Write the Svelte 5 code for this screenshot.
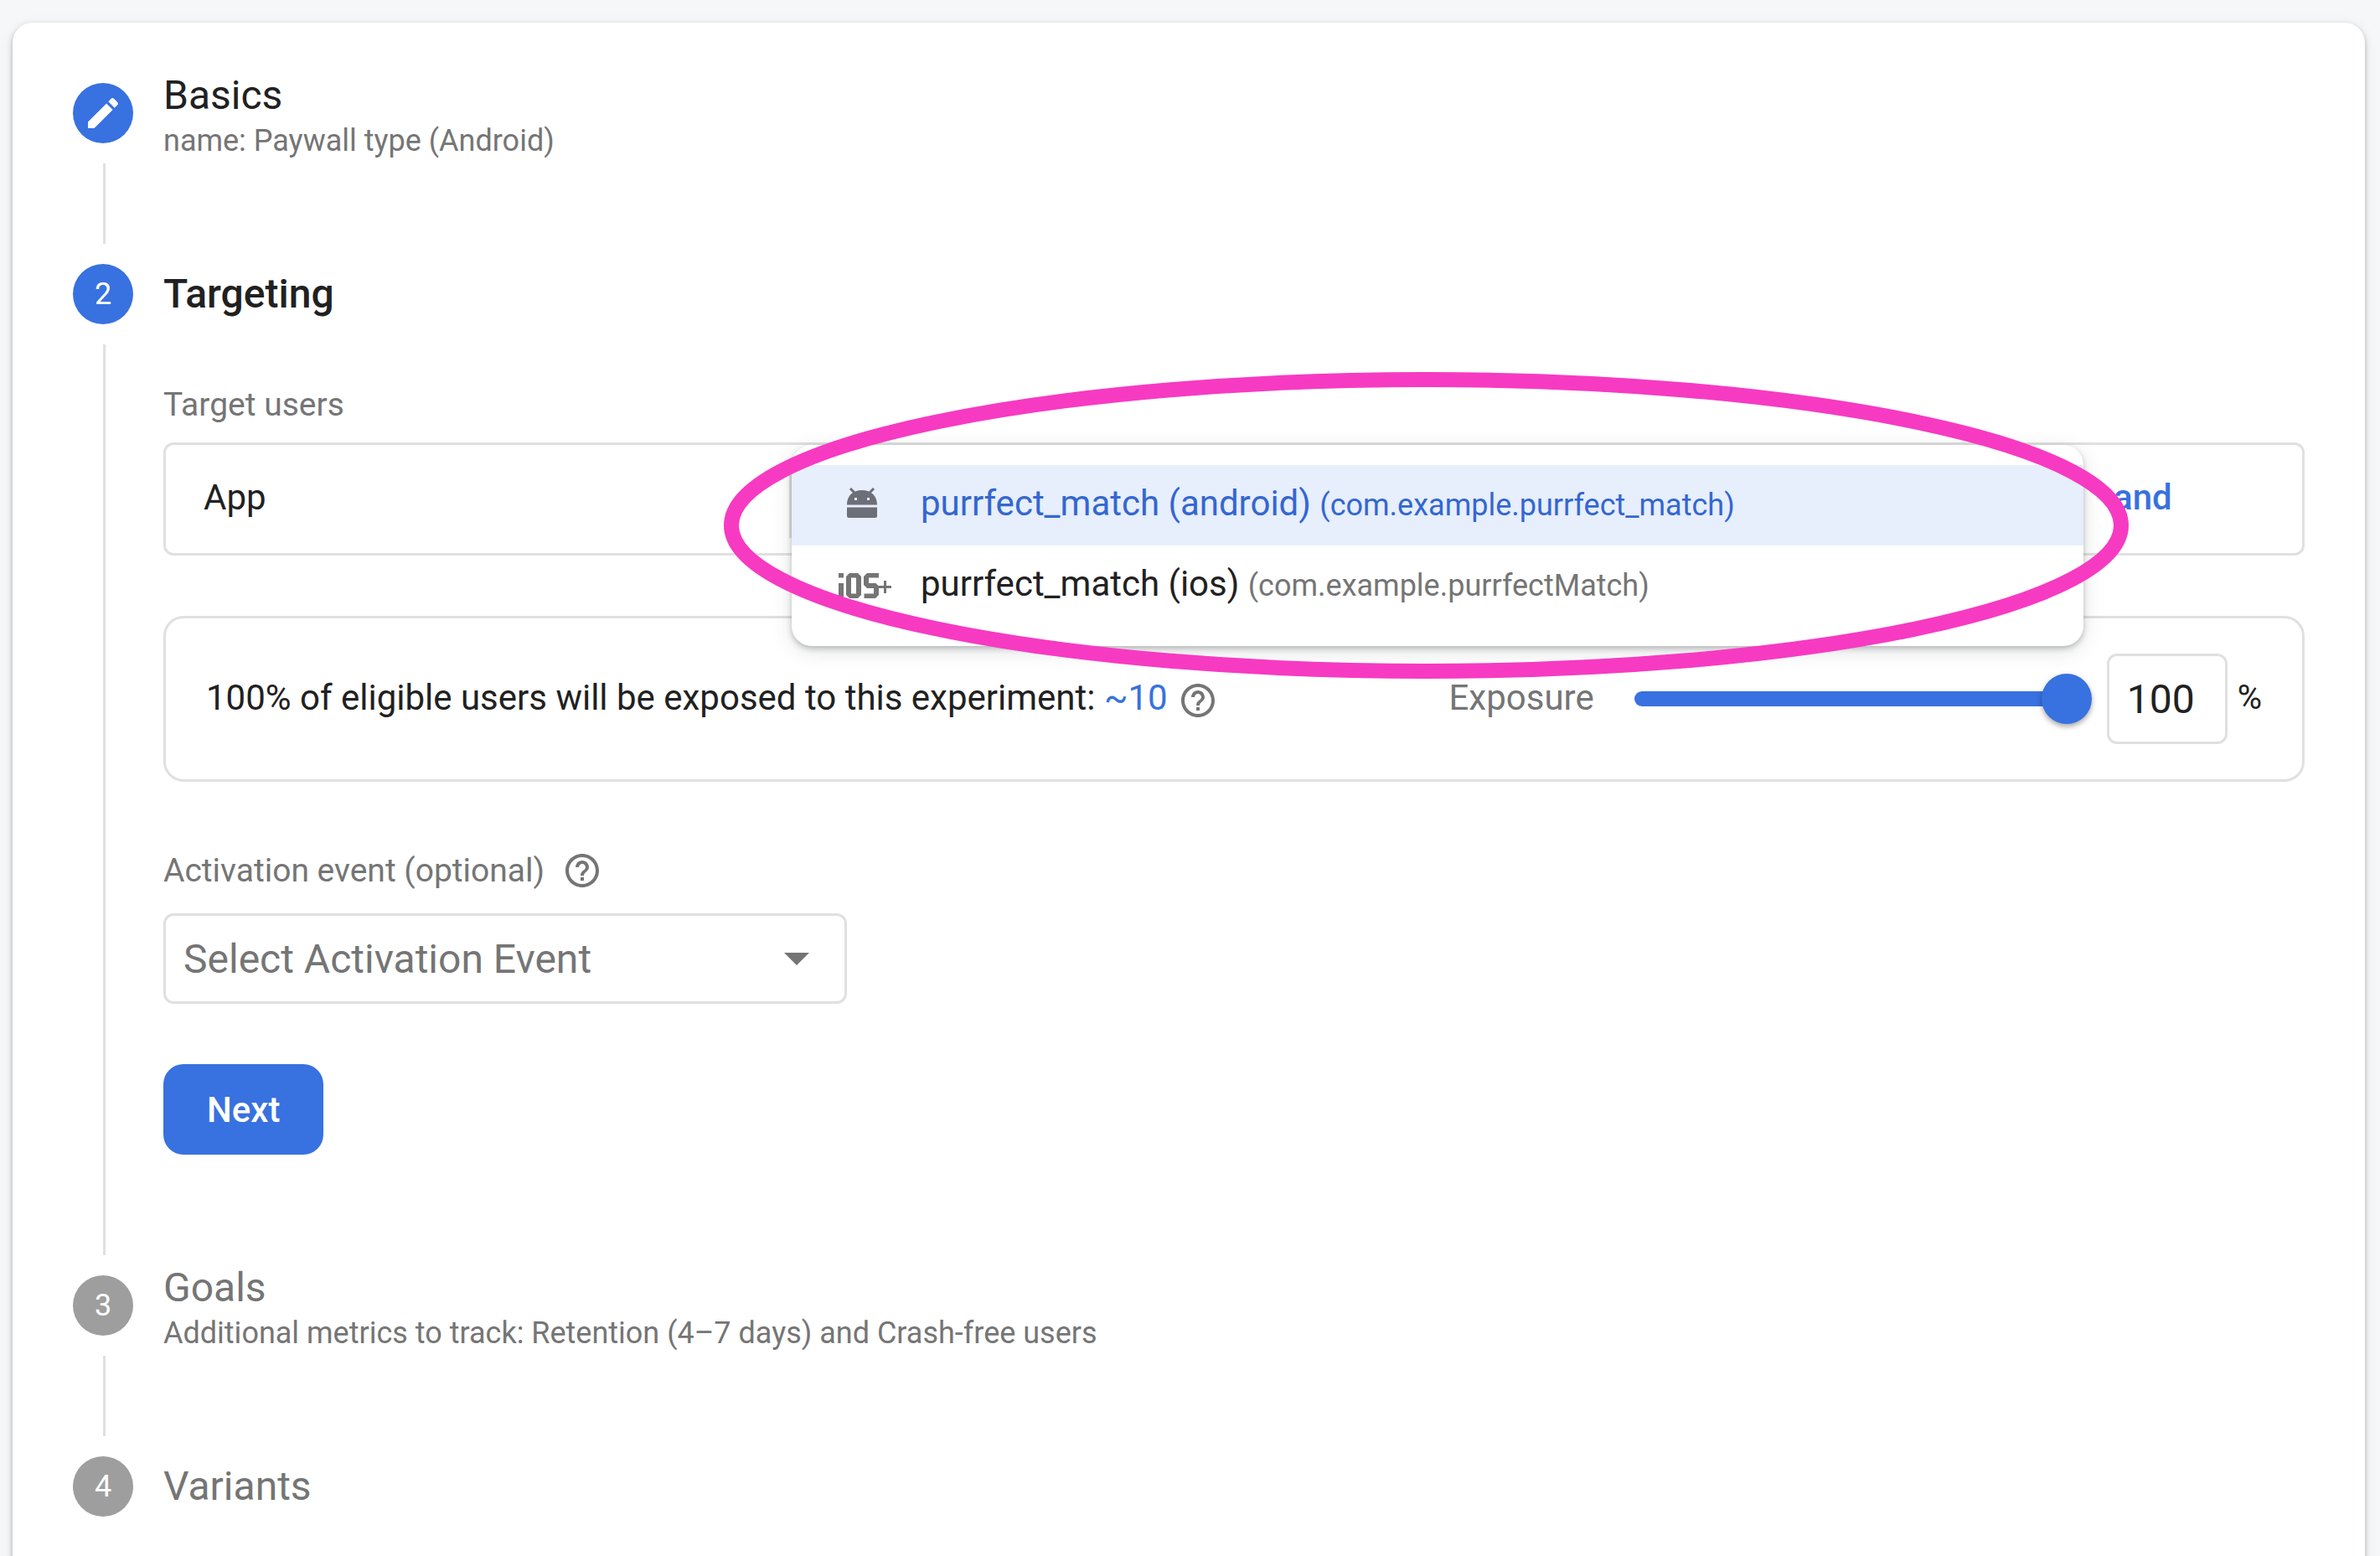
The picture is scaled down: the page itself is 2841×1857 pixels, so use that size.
<script>
  let exposure = $state(100);
  let activationEvent = $state('');

  const apps = [
    { platform: 'android', name: 'purrfect_match (android)', id: '(com.example.purrfect_match)', active: true },
    { platform: 'ios', name: 'purrfect_match (ios)', id: '(com.example.purrfectMatch)', active: false }
  ];
</script>

{#snippet help()}
  <svg class="help" viewBox="0 0 24 24" aria-hidden="true">
    <path d="M11 18h2v-2h-2v2zm1-16C6.480 2 2 6.480 2 12s4.480 10 10 10 10-4.480 10-10S17.520 2 12 2zm0 18c-4.410 0-8-3.590-8-8s3.590-8 8-8 8 3.590 8 8-3.590 8-8 8zm0-14c-2.210 0-4 1.790-4 4h2c0-1.100.9-2 2-2s2 .9 2 2c0 2-3 1.750-3 5h2c0-2.250 3-2.500 3-5 0-2.210-1.790-4-4-4z" />
  </svg>
{/snippet}

<main class="card">
  <section class="step">
    <div class="rail">
      <span class="badge">
        <svg class="pencil" viewBox="0 0 24 24" aria-hidden="true">
          <path d="M3 17.250V21h3.750L17.810 9.940l-3.750-3.750L3 17.250zM20.710 7.040a1 1 0 0 0 0-1.410l-2.340-2.340a1 1 0 0 0-1.410 0l-1.830 1.830 3.750 3.750 1.830-1.830z" />
        </svg>
      </span>
      <span class="line"></span>
    </div>
    <div class="main">
      <header>
        <h2>Basics</h2>
        <p>name: Paywall type (Android)</p>
      </header>
    </div>
  </section>

  <section class="step open">
    <div class="rail">
      <span class="badge">2</span>
      <span class="line"></span>
    </div>
    <div class="main">
      <header>
        <h2 class="current">Targeting</h2>
      </header>
      <form class="body" onsubmit={(e) => e.preventDefault()}>
        <div class="label" id="target-label">Target users</div>
        <div class="target" role="group" aria-labelledby="target-label">
          <span class="kind">App</span>
          <div class="picker">
            <ul class="menu" role="listbox" aria-label="App">
              {#each apps as app}
                <li role="option" aria-selected={app.active} class:active={app.active}>
                  <span class="platform">
                    {#if app.platform === 'android'}
                      <svg class="android" viewBox="0 0 36 36" aria-hidden="true">
                        <path d="M0 23.500h36V33.500a2.500 2.500 0 0 1-2.500 2.500h-31a2.500 2.500 0 0 1-2.500-2.500z" />
                        <path fill-rule="evenodd" d="M0 20.500C0 9.500 7 3 18 3s18 6.500 18 17.500zM9 12v3h3v-3zM24 12v3h3v-3z" />
                        <path class="antenna" d="M4 1l5 5M32 1l-5 5" />
                      </svg>
                    {:else}
                      <svg class="ios" viewBox="0 0 64 30" aria-hidden="true">
                        <path d="M0 0h6v5.500H0zM0 12h6v18H0z" />
                        <path fill-rule="evenodd" d="M13 0h10l4 4v22l-4 4H13l-4-4V4zM15 5.500v19h6v-19z" />
                        <path d="M34 0h14v5.500H36v6.500h8.500l3.500 3.500V26l-4 4H30.500v-5.500H42V18h-8l-4-4V4z" />
                        <path d="M54 9h3v6h6v3h-6v6h-3v-6h-6v-3h6z" />
                      </svg>
                    {/if}
                  </span>
                  <span class="app">{app.name} <small>{app.id}</small></span>
                </li>
              {/each}
            </ul>
            <svg class="ring" viewBox="0 0 1678 366" preserveAspectRatio="none" aria-hidden="true">
              <ellipse cx="839" cy="183" rx="830" ry="174" />
            </svg>
          </div>
          <button type="button" class="and">and</button>
        </div>

        <div class="exposure">
          <p>100% of eligible users will be exposed to this experiment: <a href="#estimate">~10</a></p>
          {@render help()}
          <label class="slider-label" for="slider">Exposure</label>
          <input id="slider" class="slider" type="range" min="0" max="100" bind:value={exposure} />
          <input class="amount" type="text" aria-label="Exposure percentage" bind:value={exposure} />
          <span class="unit">%</span>
        </div>

        <div class="label event-label">
          <label for="event">Activation event (optional)</label>
          {@render help()}
        </div>
        <div class="select">
          <select id="event" bind:value={activationEvent}>
            <option value="">Select Activation Event</option>
          </select>
          <svg class="caret" viewBox="0 0 30 15" aria-hidden="true"><path d="M0 0h30L15 15z" /></svg>
        </div>

        <button type="submit" class="next">Next</button>
      </form>
    </div>
  </section>

  <section class="step muted">
    <div class="rail">
      <span class="badge">3</span>
      <span class="line"></span>
    </div>
    <div class="main">
      <header>
        <h2>Goals</h2>
        <p>Additional metrics to track: Retention (4–7 days) and Crash-free users</p>
      </header>
    </div>
  </section>

  <section class="step muted">
    <div class="rail">
      <span class="badge">4</span>
    </div>
    <div class="main">
      <header>
        <h2>Variants</h2>
      </header>
    </div>
  </section>
</main>

<style>
  :global(html) {
    height: 100%;
    overflow: hidden;
  }
  :global(body) {
    min-height: 100%;
    background: #f5f7f9;
    font-family: Roboto, "Liberation Sans", sans-serif;
    color: #212121;
  }
  :global(#app) {
    overflow: hidden;
  }
  * {
    box-sizing: border-box;
  }
  button,
  input,
  select {
    font-family: inherit;
    color: inherit;
    margin: 0;
  }
  .card {
    margin: 27px 18px 0 15px;
    padding: 72px 72px 0;
    border-radius: 24px 24px 0 0;
    background: #fff;
    box-shadow: 0 3px 6px rgba(0, 0, 0, 0.28), 0 3px 18px rgba(0, 0, 0, 0.06);
  }
  .step {
    display: flex;
    gap: 36px;
    min-height: 216px;
  }
  .rail {
    display: flex;
    flex: none;
    flex-direction: column;
    gap: 24px;
    width: 72px;
    padding-bottom: 24px;
  }
  .badge {
    display: flex;
    flex: none;
    align-items: center;
    justify-content: center;
    width: 72px;
    height: 72px;
    border-radius: 50%;
    background: #3871e0;
    color: #fff;
    font-size: 36px;
  }
  .line {
    flex: 1;
    width: 3px;
    margin-left: 36px;
    background: #e0e0e0;
  }
  .pencil {
    width: 48px;
    fill: #fff;
  }
  .main {
    flex: 1;
    min-width: 0;
  }
  header {
    display: flex;
    flex-direction: column;
    justify-content: center;
    height: 72px;
  }
  h2,
  p {
    margin: 0;
    font-weight: 400;
  }
  h2 {
    flex: none;
    font-size: 48px;
    line-height: 66px;
  }
  h2.current {
    font-weight: 500;
  }
  header p {
    flex: none;
    font-size: 36px;
    line-height: 42px;
    color: #757575;
  }
  .muted h2 {
    color: #757575;
  }
  .muted .badge {
    background: #9e9e9e;
  }
  .body {
    padding: 72px 0 144px;
  }
  .label {
    font-size: 39px;
    line-height: 48px;
    color: #757575;
  }
  .target {
    display: flex;
    align-items: center;
    height: 135px;
    margin-top: 21px;
    border: 3px solid #e0e0e0;
    border-radius: 12px;
    font-size: 42px;
  }
  .kind {
    flex: 0 0 744px;
    padding: 0 0 4px 45px;
  }
  .picker {
    position: relative;
    flex: 1;
    height: 93px;
    border-left: 3px solid #e0e0e0;
  }
  .menu {
    position: absolute;
    z-index: 1;
    top: -18px;
    left: 0;
    width: 100%;
    margin: 0;
    padding: 24px 0;
    border-radius: 24px;
    background: #fff;
    box-shadow: 0 3px 6px rgba(60, 64, 67, 0.3), 0 6px 24px rgba(60, 64, 67, 0.15);
    list-style: none;
  }
  .menu li {
    display: flex;
    align-items: center;
    height: 96px;
    padding: 0 56px;
  }
  .menu .active {
    background: #e7eefc;
    color: #3367d0;
  }
  .platform {
    display: flex;
    flex: none;
    width: 98px;
    fill: #757575;
  }
  .active .platform {
    padding-left: 10px;
    padding-bottom: 6px;
    fill: #6d6f78;
  }
  .android {
    width: 36px;
  }
  .antenna {
    fill: none;
    stroke: #6d6f78;
    stroke-width: 3;
  }
  .ios {
    width: 64px;
  }
  .app {
    padding-bottom: 6px;
    white-space: nowrap;
  }
  small {
    font-size: 36px;
    color: #757575;
  }
  .active small {
    color: inherit;
  }
  .ring {
    position: absolute;
    z-index: 2;
    top: -105px;
    left: -81px;
    width: calc(100% + 135px);
    height: 366px;
    fill: none;
    stroke: #f73ac2;
    stroke-width: 18px;
    pointer-events: none;
  }
  .and {
    flex: 0 0 261px;
    padding: 0 0 4px 36px;
    border: 0;
    background: none;
    color: #3871e0;
    font-size: 42px;
    font-weight: 500;
    text-align: left;
  }
  .exposure {
    display: flex;
    align-items: center;
    height: 198px;
    margin-top: 72px;
    padding: 0 48px;
    border: 3px solid #e0e0e0;
    border-radius: 24px;
    font-size: 42px;
  }
  .exposure p,
  .slider-label,
  .unit {
    padding-bottom: 3px;
  }
  .exposure a {
    color: #3871e0;
    text-decoration: none;
  }
  .help {
    flex: none;
    width: 48px;
    height: 48px;
    margin-left: 12px;
    fill: #757575;
  }
  .exposure .help {
    margin-top: 4px;
  }
  .slider-label {
    margin-left: auto;
    color: #757575;
  }
  .slider {
    appearance: none;
    width: 546px;
    height: 60px;
    margin: 0 18px 0 48px;
    background: none;
  }
  .slider::-webkit-slider-runnable-track {
    height: 18px;
    border-radius: 9px;
    background: linear-gradient(#3871e0, #3871e0) left / calc(100% - 30px) 100% no-repeat;
  }
  .slider::-webkit-slider-thumb {
    appearance: none;
    width: 60px;
    height: 60px;
    margin-top: -21px;
    border-radius: 50%;
    background: #3871e0;
    box-shadow: 0 3px 6px rgba(0, 0, 0, 0.35);
  }
  .amount {
    width: 144px;
    height: 108px;
    padding: 0 21px;
    border: 3px solid #e0e0e0;
    border-radius: 12px;
    background: #fff;
    font-size: 48px;
  }
  .unit {
    margin-left: 12px;
    font-size: 40px;
  }
  .event-label {
    display: flex;
    align-items: center;
    height: 48px;
    margin-top: 82px;
  }
  .event-label .help {
    margin-left: 21px;
  }
  .select {
    position: relative;
    width: 816px;
    margin-top: 27px;
  }
  select {
    display: block;
    appearance: none;
    width: 100%;
    height: 108px;
    padding: 0 72px 0 21px;
    border: 3px solid #e0e0e0;
    border-radius: 12px;
    background: #fff;
    color: #757575;
    font-size: 48px;
  }
  .caret {
    position: absolute;
    top: 47px;
    right: 45px;
    width: 30px;
    fill: #757575;
    pointer-events: none;
  }
  .next {
    display: block;
    height: 108px;
    margin-top: 72px;
    padding: 0 52px;
    border: 0;
    border-radius: 24px;
    background: #3871e0;
    color: #fff;
    font-size: 42px;
    font-weight: 500;
  }
</style>
